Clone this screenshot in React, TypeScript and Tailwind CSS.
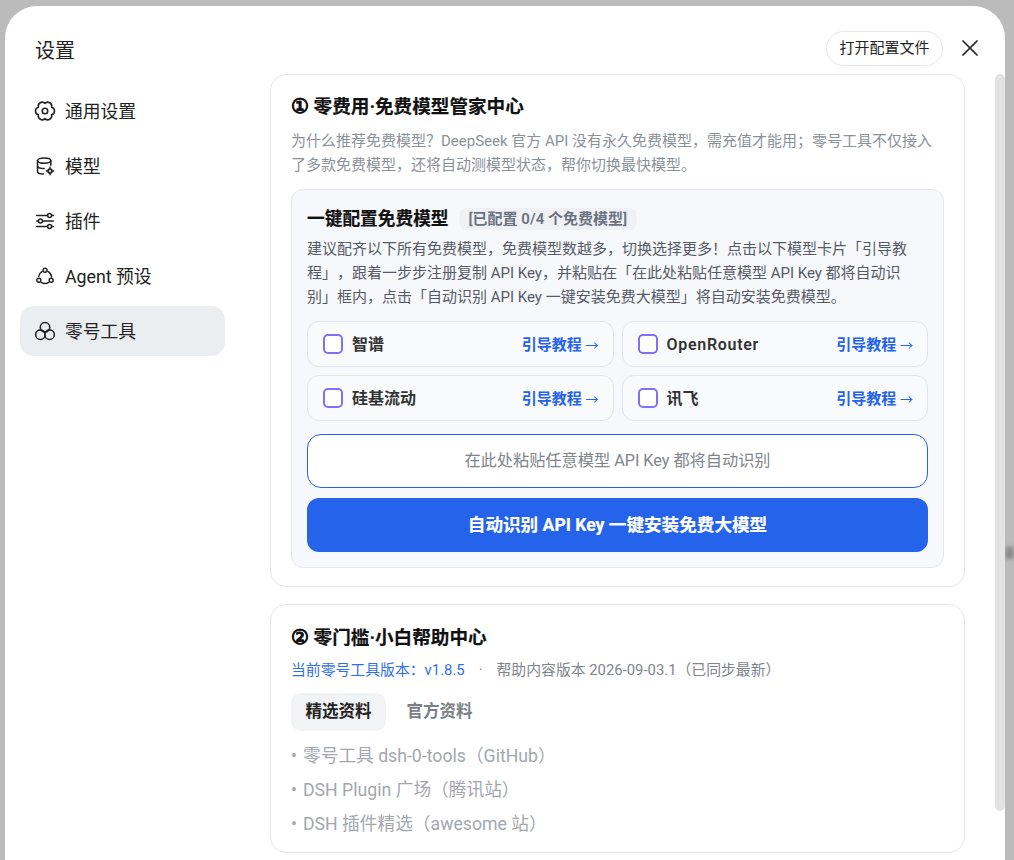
import { X } from 'lucide-react';

const FONT = "font-['Roboto','Noto_Sans_CJK_SC',sans-serif]";

function GearIcon() {
  return (
    <svg width="22" height="22" viewBox="0 0 24 24" fill="none" stroke="currentColor" strokeWidth="1.7" strokeLinecap="round" strokeLinejoin="round" className="-mx-[1px]">
      <path d="M12 3.7A4.3 4.3 0 0 1 19.2 7.85A4.3 4.3 0 0 1 19.2 16.15A4.3 4.3 0 0 1 12 20.3A4.3 4.3 0 0 1 4.8 16.15A4.3 4.3 0 0 1 4.8 7.85A4.3 4.3 0 0 1 12 3.7Z" />
      <circle cx="12" cy="12" r="3" />
    </svg>
  );
}

function DbIcon() {
  return (
    <svg width="20" height="20" viewBox="0 0 24 24" fill="none" stroke="currentColor" strokeWidth="1.8" strokeLinecap="round" strokeLinejoin="round">
      <ellipse cx="11" cy="5.5" rx="8" ry="3.2" />
      <path d="M3 5.5v13c0 1.7 3 3 7 3" />
      <path d="M3 12c0 1.7 3 3 8 3" />
      <path d="M19 5.5V11" />
      <circle cx="18" cy="18" r="3.4" fill="currentColor" stroke="none" />
      <circle cx="18" cy="18" r="1.3" fill="#fff" stroke="none" />
      <path d="M18 13.6v1M18 21.4v1M13.6 18h1M21.4 18h1" />
    </svg>
  );
}

function SlidersIcon() {
  return (
    <svg width="20" height="20" viewBox="0 0 24 24" fill="none" stroke="currentColor" strokeWidth="1.8" strokeLinecap="round">
      <path d="M2 5.5h13M20 5.5h2M2 12h2M9 12h13M2 18.5h13M20 18.5h2" />
      <circle cx="17.5" cy="5.5" r="2.4" />
      <circle cx="6.5" cy="12" r="2.4" />
      <circle cx="17.5" cy="18.5" r="2.4" />
    </svg>
  );
}

function AgentIcon() {
  return (
    <svg width="20" height="20" viewBox="0 0 24 24" fill="none" stroke="currentColor" strokeWidth="1.7" strokeLinecap="round">
      <circle cx="12" cy="5" r="2.4" />
      <circle cx="4.6" cy="17" r="2.4" />
      <circle cx="19.4" cy="17" r="2.4" />
      <path d="M8.6 6.4A8.8 8.8 0 0 0 4.4 12.6M15.4 6.4A8.8 8.8 0 0 1 20 13M7.4 19.6a8.8 8.8 0 0 0 9.2 0" />
    </svg>
  );
}

function CirclesIcon() {
  return (
    <svg width="22" height="22" viewBox="0 0 24 24" fill="none" stroke="currentColor" strokeWidth="1.7" className="-mx-[1px]">
      <circle cx="12" cy="8" r="5.2" />
      <circle cx="7" cy="16" r="5.2" />
      <circle cx="17" cy="16" r="5.2" />
    </svg>
  );
}

const navItems = [
  { label: '通用设置', icon: <GearIcon /> },
  { label: '模型', icon: <DbIcon /> },
  { label: '插件', icon: <SlidersIcon /> },
  { label: 'Agent 预设', icon: <AgentIcon /> },
  { label: '零号工具', icon: <CirclesIcon />, active: true },
];

const freeModels = [
  { name: '智谱' },
  { name: 'OpenRouter', latin: true },
  { name: '硅基流动' },
  { name: '讯飞' },
];

function ModelCard({ name, latin }: { name: string; latin?: boolean }) {
  return (
    <div className="flex h-[46px] items-center rounded-[12px] border border-[#e1e4ea] bg-[#f9fafc] pl-[15px] pr-[14px]">
      <span className="h-[20px] w-[20px] shrink-0 rounded-[5px] border-2 border-[#8070f5] bg-white" />
      <span className={`ml-[9px] mt-[2px] flex-1 text-[16px] font-semibold text-[#333] ${latin ? 'tracking-[0.7px]' : ''}`}>{name}</span>
      <span className="mt-[2px] text-[15px] font-semibold text-[#2563eb]">引导教程 <span className="text-[13px] font-normal">→</span></span>
    </div>
  );
}

export default function App() {
  return (
    <div className={`relative h-[860px] w-[1014px] overflow-hidden bg-[#bbbbbb] pl-[5px] pt-[6px] [text-spacing-trim:space-all] ${FONT}`}>
      {/* something dark behind the overlay, seen only in the right margin */}
      <div className="absolute right-0 top-[547px] h-[12px] w-[9px] bg-[#8a8a8a] blur-[2px]" />
      <div className="relative flex h-[900px] w-[1000px] rounded-t-[32px] bg-white">
        {/* sidebar */}
        <aside className="w-[265px] shrink-0 pl-[15px] pr-[45px]">
          <h1 className="mt-[32px] pl-[15px] text-[20px] leading-[26px] text-[#222]">设置</h1>
          <nav className="mt-[22px] flex flex-col gap-[5px]">
            {navItems.map((item) => (
              <div
                key={item.label}
                className={`flex h-[50px] items-center gap-[10px] rounded-[14px] pl-[15px] text-[#222] ${item.active ? 'bg-[#ebeef1]' : ''}`}
              >
                {item.icon}
                <span className="mt-[1px] text-[17.8px] leading-[26px]">{item.label}</span>
              </div>
            ))}
          </nav>
        </aside>

        {/* main column */}
        <main className="min-w-0 flex-1">
          <div className="flex h-[68px] items-start justify-end pr-[21.5px] pt-[25px]">
            <button className="h-[35px] w-[117px] rounded-full border border-[#e5e7eb] text-[15px] text-[#222]">打开配置文件</button>
            <X size={28} strokeWidth={1.5} className="ml-[12.5px] mt-[3px] text-[#222]" />
          </div>
          <div className="flex">
            <div className="w-[695px] shrink-0">
              <section className="h-[513px] rounded-[16px] border border-[#e5e7eb] px-[20px] pt-[18px]">
                <h2 className="text-[18.6px] font-bold leading-[26px] text-[#111] [-webkit-text-stroke:0.2px]">
                  <span className="font-['Liberation_Sans',sans-serif] text-[20px]">①</span> 零费用·免费模型管家中心
                </h2>
                <p className="mt-[9px] text-[15px] leading-[24px] text-[#8c9199]">
                  为什么推荐免费模型？DeepSeek 官方 API 没有永久免费模型，需充值才能用；零号工具不仅接入了多款免费模型，还将自动测模型状态，帮你切换最快模型。
                </p>
                <div className="mt-[12px] h-[379px] rounded-[12px] border border-[#e5e7ef] bg-[#f7f8fc] px-[15px] pt-[15px]">
                  <div className="flex items-center">
                    <h3 className="text-[17.7px] font-bold leading-[28px] text-[#111] [-webkit-text-stroke:0.2px]">一键配置免费模型</h3>
                    <span className="ml-[10px] rounded-[8px] bg-[#eff1f5] px-[10px] text-[15px] font-semibold leading-[22px] text-[#6b7280]">[已配置 0/4 个免费模型]</span>
                  </div>
                  <p className="mt-[4px] text-[15px] leading-[24px] text-[#555b66]">
                    建议配齐以下所有免费模型，免费模型数越多，切换选择更多！点击以下模型卡片「引导教程」，跟着一步步注册复制 API Key，并粘贴在「在此处粘贴任意模型 API Key 都将自动识别」框内，点击「自动识别 API Key 一键安装免费大模型」将自动安装免费模型。
                  </p>
                  <div className="mt-[12px] grid grid-cols-2 gap-[8px]">
                    {freeModels.map((m) => (
                      <ModelCard key={m.name} name={m.name} latin={m.latin} />
                    ))}
                  </div>
                  <div className="mt-[13px] flex h-[54px] items-center justify-center rounded-[14px] border border-[#2563eb] bg-white text-[16.2px] text-[#80858c]">
                    在此处粘贴任意模型 API Key 都将自动识别
                  </div>
                  <button className="mt-[10px] h-[54px] w-full rounded-[12px] bg-[#2563eb] text-[17.6px] font-bold text-white [-webkit-text-stroke:0.2px]">
                    自动识别 API Key 一键安装免费大模型
                  </button>
                </div>
              </section>

              <section className="mt-[17px] h-[249px] rounded-[16px] border border-[#e5e7eb] px-[20px] pt-[19px]">
                <h2 className="text-[18.6px] font-bold leading-[26px] text-[#111] [-webkit-text-stroke:0.2px]">
                  <span className="font-['Liberation_Sans',sans-serif] text-[20px]">②</span> 零门槛·小白帮助中心
                </h2>
                <div className="mt-[8px] flex text-[14.85px] leading-[22px]">
                  <span className="text-[#2f6fed]">当前零号工具版本：v1.8.5</span>
                  <span className="mx-[14px] text-[#8c9199]">·</span>
                  <span className="text-[#80858c]">帮助内容版本 2026-09-03.1（已同步最新）</span>
                </div>
                <div className="mt-[12px] flex gap-[6px]">
                  <span className="flex h-[38px] w-[95px] items-center justify-center rounded-[10px] bg-[#f2f3f5] text-[16.5px] font-semibold text-[#222]">精选资料</span>
                  <span className="flex h-[38px] w-[95px] items-center justify-center text-[16.5px] font-semibold text-[#7b8087]">官方资料</span>
                </div>
                <ul className="mt-[8px] text-[17.7px] leading-[34px] text-[#a3a7ad]">
                  <li><span className="inline-block w-[12px]">•</span>零号工具 dsh-0-tools（GitHub）</li>
                  <li><span className="inline-block w-[12px]">•</span>DSH Plugin 广场（腾讯站）</li>
                  <li><span className="inline-block w-[12px]">•</span>DSH 插件精选（awesome 站）</li>
                </ul>
              </section>
            </div>
            {/* scrollbar */}
            <div className="ml-[30px] h-[737px] w-[10px] rounded-[6px] bg-[#e3e3e3]" />
          </div>
        </main>
      </div>
    </div>
  );
}
